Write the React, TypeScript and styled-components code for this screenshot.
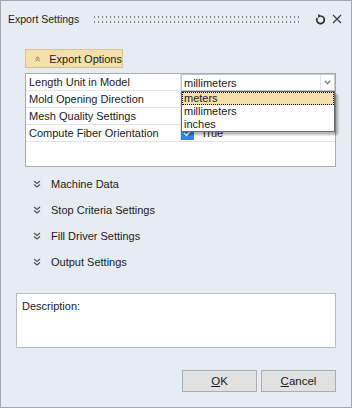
import styled, { createGlobalStyle } from "styled-components";

const GlobalStyle = createGlobalStyle`
  html, body {
    margin: 0;
    padding: 0;
  }
  body {
    font-family: "Liberation Sans", Arial, sans-serif;
    font-size: 11px;
    color: #1b1b1b;
  }
`;

type Property = {
  label: string;
  kind?: "combo" | "check";
};

const properties: Property[] = [
  { label: "Length Unit in Model", kind: "combo" },
  { label: "Mold Opening Direction" },
  { label: "Mesh Quality Settings" },
  { label: "Compute Fiber Orientation", kind: "check" },
];

const units = ["meters", "millimeters", "inches"];

const sections = [
  "Machine Data",
  "Stop Criteria Settings",
  "Fill Driver Settings",
  "Output Settings",
];

function DoubleChevron({ up }: { up?: boolean }) {
  return (
    <svg width="8" height="8" viewBox="0 0 8 8" fill="none">
      <g
        stroke="#4e5358"
        strokeWidth="1.2"
        transform={up ? "rotate(180 4 4)" : undefined}
      >
        <path d="M1 1 L4 3.5 L7 1" />
        <path d="M1 4.5 L4 7 L7 4.5" />
      </g>
    </svg>
  );
}

export default function App() {
  return (
    <>
      <GlobalStyle />
      <Window>
        <TitleBar>
          <Title>Export Settings</Title>
          <Grip />
          <IconButton aria-label="Reset">
            <svg width="11" height="11" viewBox="0 0 11 11" fill="none">
              <path
                d="M5.5 2 A3.8 3.8 0 1 1 2.2 4"
                stroke="#2a2e33"
                strokeWidth="1.7"
              />
              <path d="M3.2 0 L6.2 2 L3.2 4 Z" fill="#2a2e33" />
            </svg>
          </IconButton>
          <IconButton aria-label="Close">
            <svg width="10" height="10" viewBox="0 0 10 10" fill="none">
              <path d="M1 1 L9 9 M9 1 L1 9" stroke="#33373c" strokeWidth="1.1" />
            </svg>
          </IconButton>
        </TitleBar>

        <Content>
          <Options>
            <ExpandToggle>
              <DoubleChevron up />
              <span>Export Options</span>
            </ExpandToggle>

            <PropertyGrid>
              {properties.map((p) => (
                <Row key={p.label}>
                  <Label>{p.label}</Label>
                  <Value>
                    {p.kind === "combo" && (
                      <Combo>
                        <ComboText>millimeters</ComboText>
                        <ComboArrow>
                          <svg width="7" height="5" viewBox="0 0 7 5" fill="none">
                            <path
                              d="M0.8 0.8 L3.5 3.5 L6.2 0.8"
                              stroke="#8a8e93"
                              strokeWidth="1.6"
                            />
                          </svg>
                        </ComboArrow>
                        <DropList>
                          {units.map((u) => (
                            <DropItem key={u} $selected={u === "meters"}>
                              {u}
                            </DropItem>
                          ))}
                        </DropList>
                      </Combo>
                    )}
                    {p.kind === "check" && (
                      <>
                        <CheckBox>
                          <svg width="9" height="8" viewBox="0 0 9 8" fill="none">
                            <path
                              d="M1 4 L3.5 6.3 L8 1.2"
                              stroke="#ffffff"
                              strokeWidth="1.6"
                            />
                          </svg>
                        </CheckBox>
                        <CheckText>True</CheckText>
                      </>
                    )}
                  </Value>
                </Row>
              ))}
            </PropertyGrid>

            <SectionList>
              {sections.map((s) => (
                <SectionRow key={s}>
                  <DoubleChevron />
                  <span>{s}</span>
                </SectionRow>
              ))}
            </SectionList>
          </Options>

          <Description>Description:</Description>

          <Footer>
            <DialogButton>
              <u>O</u>K
            </DialogButton>
            <DialogButton>
              <u>C</u>ancel
            </DialogButton>
          </Footer>
        </Content>
      </Window>
    </>
  );
}

const Window = styled.div`
  width: 352px;
  height: 408px;
  box-sizing: border-box;
  border: 1px solid #a4a9ae;
  background: #e6ecf1;
  display: flex;
  flex-direction: column;
`;

const TitleBar = styled.div`
  height: 36px;
  display: flex;
  align-items: center;
  padding: 0 9px 0 7px;
`;

const Title = styled.div`
  font-size: 10.5px;
  color: #1e1e1e;
  white-space: nowrap;
`;

const Grip = styled.div`
  flex: 1;
  height: 7px;
  margin: 0 10px 0 15px;
  background-image: repeating-linear-gradient(
      to right,
      #7e858d 0 1px,
      transparent 1px 4px
    ),
    repeating-linear-gradient(to right, #7e858d 0 1px, transparent 1px 4px);
  background-size: 100% 2px, 100% 2px;
  background-position: 0 0, 0 5px;
  background-repeat: no-repeat;
`;

const IconButton = styled.div`
  width: 11px;
  height: 12px;
  display: flex;
  align-items: center;
  justify-content: center;
  margin-left: 5px;
`;

const Content = styled.div`
  flex: 1;
  display: flex;
  flex-direction: column;
  padding: 12px 15px 0 15px;
`;

const Options = styled.div`
  padding-left: 9px;
`;

const ExpandToggle = styled.div`
  width: 98px;
  height: 19px;
  box-sizing: border-box;
  display: flex;
  align-items: center;
  gap: 9px;
  padding-left: 9px;
  white-space: nowrap;
  background: #f5dfab;
  border: 1px solid #d9c58f;
`;

const PropertyGrid = styled.div`
  margin-top: 5px;
  height: 94px;
  box-sizing: border-box;
  border: 1px solid #a7abb0;
  background: #ffffff;
`;

const Row = styled.div`
  display: grid;
  grid-template-columns: 155px 1fr;
  height: 17px;
  box-sizing: border-box;
  border-bottom: 1px solid #e3e3e3;
`;

const Label = styled.div`
  padding-left: 3px;
  line-height: 16px;
  border-right: 1px solid #e3e3e3;
  white-space: nowrap;
`;

const Value = styled.div`
  position: relative;
  display: flex;
  align-items: center;
`;

const Combo = styled.div`
  position: relative;
  width: 100%;
  height: 17px;
  box-sizing: border-box;
  border: 1px solid #c4c7ca;
  display: flex;
  align-items: center;
`;

const ComboText = styled.div`
  flex: 1;
  padding-left: 2px;
`;

const ComboArrow = styled.div`
  width: 13px;
  height: 100%;
  border-left: 1px solid #e4e4e4;
  display: flex;
  align-items: center;
  justify-content: center;
`;

const DropList = styled.div`
  position: absolute;
  top: 16px;
  left: -1px;
  right: -1px;
  z-index: 2;
  background: #ffffff;
  border: 1px solid #666a6e;
  box-shadow: 3px 3px 2px rgba(0, 0, 0, 0.28);
`;

const DropItem = styled.div<{ $selected?: boolean }>`
  height: 13px;
  line-height: 13px;
  padding-left: 2px;
  background: ${(p) => (p.$selected ? "#f5dfab" : "transparent")};
  outline: ${(p) => (p.$selected ? "1px dotted #111" : "none")};
  outline-offset: -1px;
`;

const CheckBox = styled.div`
  width: 13px;
  height: 13px;
  background: #2f86e6;
  display: flex;
  align-items: center;
  justify-content: center;
`;

const CheckText = styled.div`
  margin-left: 7px;
`;

const SectionList = styled.div`
  margin-top: 4px;
  display: flex;
  flex-direction: column;
`;

const SectionRow = styled.div`
  height: 26px;
  display: flex;
  align-items: center;
  gap: 10px;
  padding-left: 8px;
`;

const Description = styled.div`
  margin-top: 18px;
  height: 55px;
  box-sizing: border-box;
  padding: 6px 5px;
  background: #ffffff;
  border: 1px solid #b8bdc2;
`;

const Footer = styled.div`
  margin-top: 22px;
  display: flex;
  justify-content: flex-end;
  gap: 4px;
`;

const DialogButton = styled.div`
  width: 75px;
  height: 22px;
  box-sizing: border-box;
  display: flex;
  align-items: center;
  justify-content: center;
  background: #e1e1e1;
  border: 1px solid #adadad;
  font-size: 11.5px;
`;
